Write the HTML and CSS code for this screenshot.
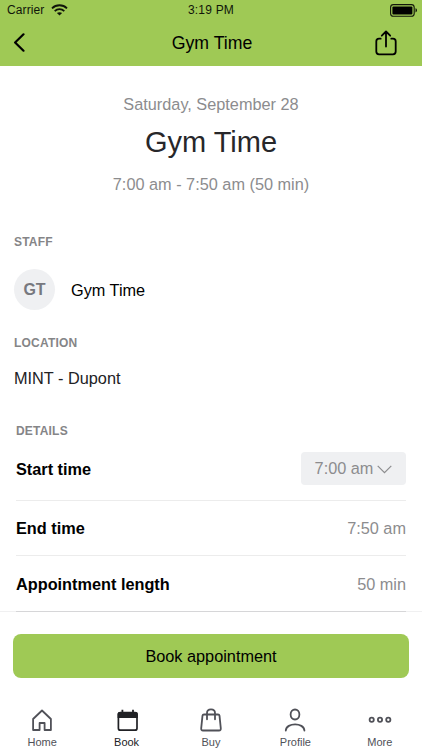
FILE: index.html
```html
<!DOCTYPE html>
<html lang="en">
<head>
<meta charset="utf-8">
<title>Gym Time</title>
<link rel="stylesheet" href="styles.css">
</head>
<body>
<header class="top">
  <div class="status">
    <div class="carrier"><span>Carrier</span>
      <svg class="wifi" width="17" height="12" viewBox="0 0 17 12" fill="none" stroke="#10150a" stroke-width="1.8"><path d="M1 4.3C5.2.2 11.8.2 16 4.3M3.7 7.1c2.7-2.6 6.9-2.6 9.6 0"/><path d="M8.5 11.5 5.9 9.1c1.5-1.3 3.7-1.3 5.2 0z" fill="#10150a" stroke="none"/></svg>
    </div>
    <span class="clock">3:19 PM</span>
    <svg class="battery" width="28" height="13" viewBox="0 0 28 13"><rect x=".6" y=".6" width="23.6" height="11.6" rx="2.8" fill="none" stroke="#10150a" stroke-width="1.1"/><rect x="2.4" y="2.4" width="20" height="8" rx="1" fill="#000"/><path d="M25.5 4.3c2 .7 2 3.5 0 4.2z" fill="#10150a"/></svg>
  </div>
  <nav class="navbar">
    <svg class="back" width="12" height="19" viewBox="0 0 12 19" fill="none" stroke="#000" stroke-width="2.2" stroke-linecap="round" stroke-linejoin="round"><path d="M10.500 1.300 2.100 9.500 10.500 17.700"/></svg>
    <h2>Gym Time</h2>
    <svg class="share" width="22" height="26" viewBox="0 0 22 26" fill="none" stroke="#000" stroke-width="1.8" stroke-linecap="round" stroke-linejoin="round"><path d="M5.7 8.7H4Q1.3 8.7 1.3 11.4V21.6Q1.3 24.3 4 24.3H18Q20.7 24.3 20.7 21.6V11.4Q20.7 8.7 18 8.7H16.3M11 16.5V1.7M6.8 5.7 11 1.5 15.2 5.7"/></svg>
  </nav>
</header>
<main>
  <section class="summary">
    <p class="date">Saturday, September 28</p>
    <h1>Gym Time</h1>
    <p class="range">7:00 am - 7:50 am (50 min)</p>
  </section>
  <section class="staff">
    <h3>STAFF</h3>
    <div class="person"><span class="avatar">GT</span><span>Gym Time</span></div>
  </section>
  <section class="location">
    <h3>LOCATION</h3>
    <p>MINT - Dupont</p>
  </section>
  <section class="details">
    <h3>DETAILS</h3>
    <div class="row first"><strong>Start time</strong>
      <button class="select"><span>7:00 am</span><svg width="15" height="9" viewBox="0 0 15 9" fill="none" stroke="#8c8c8e" stroke-width="1.2"><path d="M.7.8 7.5 7.7 14.3.8"/></svg></button>
    </div>
    <div class="row"><strong>End time</strong><span class="value">7:50 am</span></div>
    <div class="row last"><strong>Appointment length</strong><span class="value">50 min</span></div>
  </section>
</main>
<footer>
  <button class="book">Book appointment</button>
  <nav class="tabs">
    <a class="tab"><svg width="24" height="26" viewBox="0 0 24 26" fill="none" stroke="#505158" stroke-width="1.8" stroke-linejoin="round"><path d="M3.1 11 12 2.5 20.9 11V22H14.6V15H9.6V22H3.1Z"/></svg><span>Home</span></a>
    <a class="tab active"><svg width="24" height="26" viewBox="0 0 24 26"><rect x="3.4" y="4.6" width="18.6" height="17.6" rx="2" fill="none" stroke="#202125" stroke-width="1.7"/><path d="M2.6 10V6q0-2 2-2H20.8q2 0 2 2v4zM6.500 1.800h1.800v4H6.500zM17.100 1.800h1.800v4h-1.800z" fill="#202125"/></svg><span>Book</span></a>
    <a class="tab"><svg width="24" height="26" viewBox="0 0 24 26" fill="none" stroke="#505158" stroke-width="1.8" stroke-linecap="round" stroke-linejoin="round"><path d="M5 6.500H19Q20.300 6.500 20.500 7.700L21.800 20.300Q22 22.500 20 22.500H4Q2 22.500 2.200 20.300L3.500 7.700Q3.700 6.500 5 6.500ZM8 11.300V5C8 .2 16 .2 16 5V11.300"/></svg><span>Buy</span></a>
    <a class="tab"><svg width="24" height="26" viewBox="0 0 24 26" fill="none" stroke="#505158" stroke-width="1.8" stroke-linecap="round"><ellipse cx="12" cy="6.5" rx="4.4" ry="5"/><path d="M2.8 22.500C3.300 14.300 20.900 14.300 21.400 22.500"/></svg><span>Profile</span></a>
    <a class="tab"><svg width="24" height="26" viewBox="0 0 24 26" fill="none" stroke="#505158" stroke-width="1.8"><circle cx="3.7" cy="11.8" r="2.1"/><circle cx="12" cy="11.8" r="2.1"/><circle cx="20.3" cy="11.8" r="2.1"/></svg><span>More</span></a>
  </nav>
</footer>
</body>
</html>
```
FILE: styles.css
```css
* { box-sizing: border-box; }
body {
  margin: 0;
  height: 750px;
  display: flex;
  flex-direction: column;
  overflow: hidden;
  background: #fff;
  color: #000;
  font: 16.3px/20px "Liberation Sans", Arial, sans-serif;
}
h1, h2, h3, p { margin: 0; font-weight: 400; }
button { border: 0; font: inherit; }
svg { display: block; flex: none; }
.top { height: 66px; background: #9fc955; }
.status {
  height: 19px;
  padding: 0 4px 0 7px;
  display: grid;
  grid-template-columns: 1fr auto 1fr;
  align-items: center;
  font-size: 12px;
  line-height: 19px;
  color: #10150a;
}
.carrier { display: flex; gap: 7px; align-items: center; letter-spacing: .1px; }
.carrier span { padding-top: 1px; }
.clock { letter-spacing: .2px; margin-left: -3px; }
.battery { justify-self: end; }
.navbar {
  height: 47px;
  padding: 0 25px 0 13px;
  display: grid;
  grid-template-columns: 1fr auto 1fr;
  align-items: center;
}
.navbar h2 { font-size: 17.7px; padding-left: 14px; }
.share { justify-self: end; }
main { flex: none; height: 545px; position: relative; z-index: 1; }
.summary { padding-top: 28px; text-align: center; color: #8c8c8e; }
h1 { font-size: 29px; line-height: 36px; margin: 10px 0 14px; color: #27272a; }
h3 { font-size: 12px; line-height: 14px; font-weight: 700; letter-spacing: .2px; color: #858587; }
.staff { padding: 41px 14px 0; }
.person { display: flex; align-items: center; gap: 16px; margin-top: 20px; }
.avatar {
  width: 41px;
  height: 41px;
  border-radius: 50%;
  background: #eff0f2;
  color: #77787e;
  font-size: 16px;
  font-weight: 700;
  line-height: 42px;
  text-align: center;
}
.location { padding: 26px 14px 0; }
.location p { margin-top: 18px; color: #222225; }
.details { padding: 36px 16px 0; }
.row {
  height: 55px;
  display: flex;
  align-items: center;
  justify-content: space-between;
  border-bottom: 1px solid #ececec;
}
.row.first { height: 63px; }
.row.last { height: 56px; border-color: #d6d6d8; }
.value { color: #8c8c8e; }
.select {
  width: 105px;
  height: 33px;
  margin-top: -2px;
  padding: 0;
  display: flex;
  align-items: center;
  justify-content: center;
  gap: 4px;
  border-radius: 4px;
  background: #eff0f2;
  color: #8c8c8e;
}
.select svg { margin-top: 3px; }
footer { flex: 1; border-top: 1px solid #f0f0f1; padding: 22px 13px 0; }
.book {
  display: block;
  width: 396px;
  height: 44px;
  padding: 0;
  border-radius: 8px;
  background: #9fc955;
  color: #000;
}
.tabs { display: grid; grid-template-columns: repeat(5, 1fr); margin: 30px -13px 0; }
.tab { display: flex; flex-direction: column; align-items: center; color: #505158; font-size: 11px; line-height: 14px; }
.tab span { margin-top: 1px; }
.active { color: #202125; }
```
